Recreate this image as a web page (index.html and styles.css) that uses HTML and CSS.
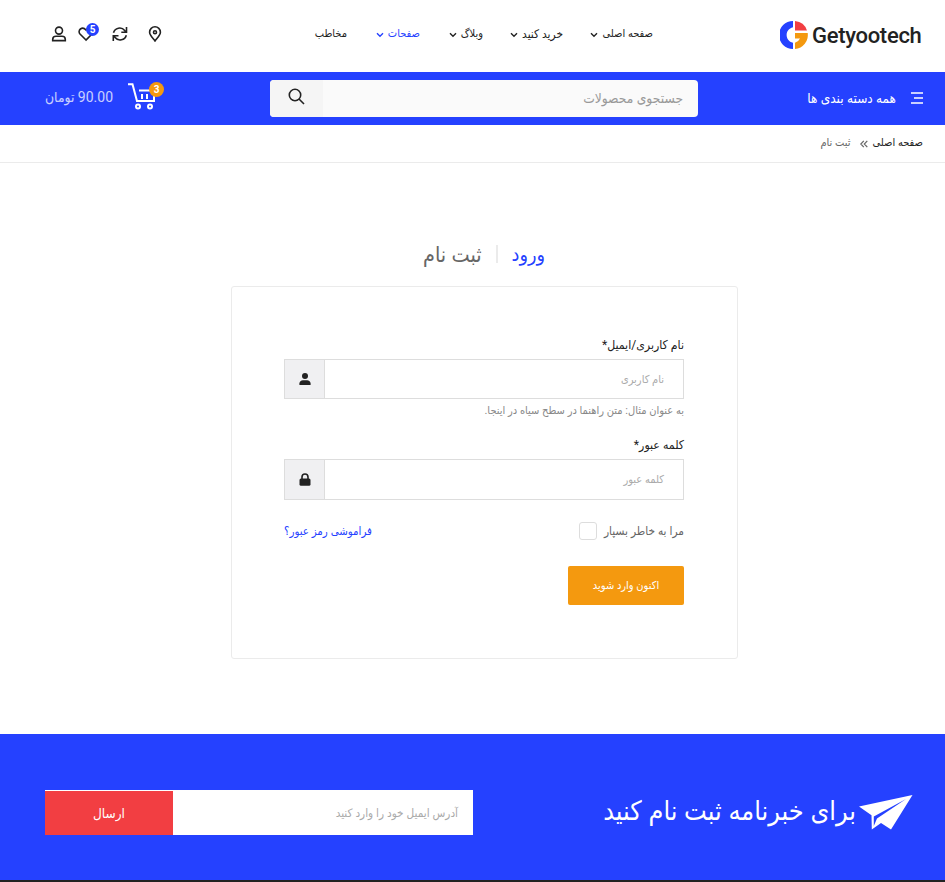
FILE: index.html
```html
<!DOCTYPE html>
<html lang="fa" dir="rtl">
<head>
<meta charset="utf-8">
<title>Getyootech</title>
<link rel="stylesheet" href="styles.css">
</head>
<body>
<header class="top">
  <a class="logo" dir="ltr">
    <svg width="28" height="28" viewBox="0 0 28 28"><path fill="#2541ff" d="M13 0v6.200c-8.500 2-8.500 13.600 0 15.600V28A14 14 0 0 1 13 0z"/><path fill="#f23e42" d="M15 0a14 14 0 0 1 12 9.500H15z"/><path fill="#f4990f" d="M15 12h12.700a14 14 0 0 1-12.700 16v-6.200a8 8 0 0 0 5-4.300h-5z"/></svg>
    <span>Getyootech</span>
  </a>
  <nav class="menu">
    <a><span>صفحه اصلی</span><svg class="chev" viewBox="0 0 8 6"><path d="M1 1.200l3 3 3-3"/></svg></a>
    <a class="shop"><span>خرید کنید</span><svg class="chev" viewBox="0 0 8 6"><path d="M1 1.200l3 3 3-3"/></svg></a>
    <a><span>وبلاگ</span><svg class="chev" viewBox="0 0 8 6"><path d="M1 1.200l3 3 3-3"/></svg></a>
    <a class="active"><span>صفحات</span><svg class="chev" viewBox="0 0 8 6"><path d="M1 1.200l3 3 3-3"/></svg></a>
    <a><span>مخاطب</span></a>
  </nav>
  <div class="tools" dir="ltr">
    <svg width="16" height="16" viewBox="0 0 16 16"><circle cx="8" cy="4.600" r="3.500"/><path d="M1.700 14.600v-1.200c0-2 1.400-3.200 3.300-3.200h6c1.900 0 3.300 1.200 3.300 3.200v1.200z"/></svg>
    <div class="wish"><svg width="16" height="16" viewBox="0 0 16 16"><path d="M8 14L2 8C-1 4.400 4.200-.4 8 4c3.800-4.400 9 .4 6 4z"/></svg><b class="badge">5</b></div>
    <svg width="16" height="16" viewBox="0 0 16 16"><path d="M1.500 6.800a6.400 6.400 0 0 1 11.200-2.300L14.300 6.200M14.500 1v5.300H9.300M14.300 9.200a6.400 6.400 0 0 1-11.200 2.300L1.500 9.800M1.300 15V9.700h5.200"/></svg>
    <svg width="14" height="16" viewBox="0 0 14 16"><path d="M7 15C4.500 11.800 1.600 9 1.600 6.200a5.400 5.400 0 0 1 10.800 0c0 2.800-2.900 5.600-5.400 8.800z"/><circle cx="7" cy="6.200" r="1.500"/></svg>
  </div>
</header>
<div class="bar">
  <div class="cats"><svg width="12" height="12" viewBox="0 0 12 12"><path d="M0 1h12M3 6h9M0 11h12"/></svg><span>همه دسته بندی ها</span></div>
  <div class="search"><span>جستجوی محصولات</span><button><svg width="17" height="17" viewBox="0 0 17 17"><circle cx="7" cy="7" r="5.700"/><path d="M11 11l5 5"/></svg></button></div>
  <div class="cart" dir="ltr">
    <span class="price" dir="rtl"><bdi class="num">90.00</bdi> <bdi>تومان</bdi></span>
    <div class="basket"><svg width="29" height="27" viewBox="0 0 29 27"><path d="M0 1.200h4.500L9 18h17V9M11 7.500h14M14 11v5M19 11v5"/><circle cx="10" cy="23.500" r="2"/><circle cx="22" cy="23.500" r="2"/></svg><b class="badge">3</b></div>
  </div>
</div>
<div class="crumbs"><span>صفحه اصلی</span><svg width="8" height="8" viewBox="0 0 8 8"><path d="M3.800.8l-3 3.200 3 3.200M7.300.8l-3 3.200 3 3.200"/></svg><span class="here">ثبت نام</span></div>
<main>
  <div class="tabs"><a class="on">ورود</a><i></i><a>ثبت نام</a></div>
  <form class="card">
    <label>نام کاربری/ایمیل*</label>
    <div class="field"><span>نام کاربری</span><div class="addon"><svg width="12" height="12" viewBox="0 0 12 12"><circle cx="6" cy="3" r="3"/><path d="M.4 12V10.500C.4 8.700 2 7.300 4 7.300h4c2 0 3.600 1.400 3.600 3.200V12z"/></svg></div></div>
    <p class="hint">به عنوان مثال: متن راهنما در سطح سیاه در اینجا.</p>
    <label>کلمه عبور*</label>
    <div class="field pass"><span>کلمه عبور</span><div class="addon"><svg width="12" height="13" viewBox="0 0 12 13"><rect x=".5" y="5.500" width="11" height="7.200" rx="1.500"/><path class="ring" d="M3 6V4a3 3 0 0 1 6 0v2"/></svg></div></div>
    <div class="row"><div class="remember"><span>مرا به خاطر بسپار</span><i class="box"></i></div><a>فراموشی رمز عبور؟</a></div>
    <button class="login" type="button">اکنون وارد شوید</button>
  </form>
</main>
<section class="news">
  <h2><svg width="54" height="35" viewBox="0 0 54 35"><path d="M0 11.500L53.500 0 32 34.500 22 28 12.800 34.500 12.500 20.300z"/><path class="fold" d="M47 4L14.800 21.500V31L18 23.500z"/></svg><span>برای خبرنامه ثبت نام کنید</span></h2>
  <div class="subscribe"><span>آدرس ایمیل خود را وارد کنید</span><button>ارسال</button></div>
</section>
<footer></footer>
</body>
</html>
```
FILE: styles.css
```css
* { box-sizing: border-box; }
body { margin: 0; height: 882px; overflow: hidden; background: #fff; color: #222; font-family: Roboto, "DejaVu Sans Condensed", "DejaVu Sans", sans-serif; font-size: 11px; }
svg { display: block; flex: none; fill: none; stroke: #222; stroke-width: 1.6; }
button { border: 0; padding: 0; font-family: inherit; }
span, label, p, a { white-space: nowrap; }
.badge { position: absolute; display: flex; align-items: center; justify-content: center; border-radius: 50%; color: #fff; font-size: 10px; }

.top { height: 72px; padding: 0 23px 0 51px; display: flex; align-items: center; }
.logo { display: flex; align-items: center; gap: 4px; width: 142px; height: 28px; margin-top: -2px; font-size: 22px; font-weight: 500; letter-spacing: -.3px; }
.logo svg { stroke: none; }
.menu { display: grid; grid-template-columns: 90px 80px 63px 73px 31px; margin-right: 127px; margin-top: -5px; }
.menu a { display: flex; align-items: center; gap: 4px; }
.menu .shop { font-size: 11.8px; }
.menu .active { color: #2541ff; }
.chev { width: 8px; height: 6px; margin-top: 3px; stroke-width: 1.4; }
.active .chev { stroke: #2541ff; }
.tools { display: flex; align-items: center; width: 111px; margin-right: auto; margin-top: -4px; }
.wish { position: relative; margin: 0 18px 0 11px; }
.wish .badge { width: 13px; height: 13px; left: 8px; top: -3px; background: #2541ff; }
.tools > svg:last-child { margin-left: 20px; }

.bar { height: 53px; padding: 0 22px 0 45px; background: #2541ff; display: flex; align-items: center; color: #fff; }
.cats { width: 225px; display: flex; align-items: center; gap: 15px; font-size: 13.5px; }
.cats span { margin-top: -1px; }
.cats svg { stroke: #fff; margin-top: -1px; }
.search { width: 428px; height: 37px; border-radius: 4px; background: #fafafa; color: #999; overflow: hidden; display: flex; align-items: center; justify-content: space-between; padding-right: 15px; font-size: 13.7px; }
.search span { margin-top: -2px; }
.search button { width: 53px; height: 37px; background: #f5f5f5; display: flex; align-items: center; justify-content: center; padding-bottom: 4px; }
.cart { margin-right: auto; display: flex; align-items: center; gap: 15px; }
.price { opacity: .75; font-size: 13.8px; margin-top: -3px; }
.num { font-size: 14px; }
.basket { position: relative; width: 36px; margin-top: -4px; }
.basket svg { stroke: #fff; stroke-width: 2; }
.basket .badge { width: 15px; height: 15px; left: 21px; top: -1px; background: #f4990f; }

.crumbs { height: 38px; padding: 0 22px 2px; border-bottom: 1px solid #ebebeb; display: flex; align-items: center; }
.crumbs svg { margin: 2px 4px 0 10px; stroke: #666; stroke-width: 1.2; }
.here { color: #666; }

main { height: 571px; padding-top: 75px; }
.tabs { display: flex; align-items: center; height: 32px; margin-right: 400px; gap: 14px; font-size: 21.4px; color: #666; }
.tabs .on { color: #2541ff; font-size: 19.6px; }
.tabs i { width: 2px; height: 18px; background: #ebebeb; }
.card { width: 507px; height: 373px; margin: 16px 207px 0 0; padding: 50px 53px 0 52px; border: 1px solid #ebebeb; border-radius: 3px; }
label { display: block; height: 22px; line-height: 16px; font-size: 12.2px; }
.field { height: 40px; border: 1px solid #ddd; display: flex; align-items: center; justify-content: space-between; padding-right: 19px; color: #aaa; }
.pass { height: 41px; }
.addon { align-self: stretch; width: 40px; border-right: 1px solid #ddd; background: #f0f0f2; display: flex; align-items: center; justify-content: center; }
.addon svg { fill: #222; stroke: none; }
.addon .ring { fill: none; stroke: #222; stroke-width: 1.6; }
.hint { margin: 0 0 16px; height: 22px; line-height: 24px; color: #888; }
.row { height: 18px; margin-top: 22px; display: flex; align-items: center; justify-content: space-between; font-size: 11.8px; }
.remember { display: flex; align-items: center; gap: 7px; color: #666; }
.box { width: 18px; height: 18px; border: 1px solid #ddd; border-radius: 3px; }
.row a { color: #2541ff; font-size: 11.4px; }
.login { display: block; width: 116px; height: 39px; margin-top: 26px; border-radius: 2px; background: #f4990f; color: #fff; font-size: 11px; font-weight: 500; }

.news { height: 146px; padding: 0 32px 0 45px; background: #2541ff; color: #fff; display: flex; align-items: flex-start; justify-content: space-between; }
.news h2 { display: flex; align-items: center; gap: 3px; margin: 61px 0 0; height: 35px; font-size: 26.8px; font-weight: 400; }
.news h2 span { margin-top: -3px; }
.news h2 svg { fill: #fff; stroke: none; }
.news .fold { fill: #2541ff; }
.subscribe { width: 428px; height: 45px; margin-top: 56px; background: #fff; color: #aaa; display: flex; align-items: center; justify-content: space-between; padding-right: 15px; font-size: 11.7px; }
.subscribe button { width: 128px; height: 44px; margin-top: 1px; background: #f23e42; color: #fff; font-size: 13.5px; }
footer { height: 2px; background: #222; }
```
